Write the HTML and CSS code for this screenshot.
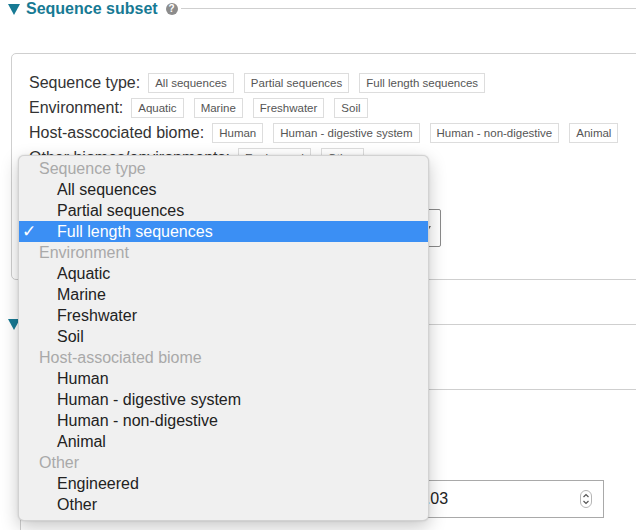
FILE: index.html
```html
<!DOCTYPE html>
<html>
<head>
<meta charset="utf-8">
<link rel="stylesheet" href="styles.css">
</head>
<body>
<div class="page">
  <section class="sec">
    <div class="sec-head">
      <svg class="tri" width="12" height="11" viewBox="0 0 12 11"><polygon points="0,0 12,0 6,11"/></svg>
      <span class="sec-title">Sequence subset</span>
      <span class="help">?</span>
      <span class="rule"></span>
    </div>
    <div class="box">
      <div class="row"><span class="lbl">Sequence type:</span><span class="tag">All sequences</span><span class="tag">Partial sequences</span><span class="tag">Full length sequences</span></div>
      <div class="row"><span class="lbl">Environment:</span><span class="tag">Aquatic</span><span class="tag">Marine</span><span class="tag">Freshwater</span><span class="tag">Soil</span></div>
      <div class="row"><span class="lbl">Host-asscociated biome:</span><span class="tag">Human</span><span class="tag">Human - digestive system</span><span class="tag">Human - non-digestive</span><span class="tag">Animal</span></div>
      <div class="row"><span class="lbl">Other biomes/environments:</span><span class="tag">Engineered</span><span class="tag">Other</span></div>
      <div class="select"><span class="sel-val"></span><span class="caret"></span></div>
    </div>
  </section>

  <section class="sec sec2">
    <div class="sec-head">
      <svg class="tri" width="12" height="11" viewBox="0 0 12 11"><polygon points="0,0 12,0 6,11"/></svg>
      <span class="rule"></span>
    </div>
    <div class="box box2">
      <div class="field">
        <div class="num">
          <span class="num-val">0.03</span>
          <svg class="spin" width="12" height="18" viewBox="0 0 12 18"><rect x="0.5" y="0.5" width="11" height="17" rx="5.5" fill="#fff" stroke="#b5b5b5"/><polyline points="3.5,7 6,4.5 8.5,7" fill="none" stroke="#555" stroke-width="1.2"/><polyline points="3.5,11 6,13.5 8.5,11" fill="none" stroke="#555" stroke-width="1.2"/></svg>
        </div>
      </div>
    </div>
  </section>

  <div class="menu">
    <div class="grp">Sequence type</div>
    <div class="opt">All sequences</div>
    <div class="opt">Partial sequences</div>
    <div class="opt sel"><span class="check">✓</span>Full length sequences</div>
    <div class="grp">Environment</div>
    <div class="opt">Aquatic</div>
    <div class="opt">Marine</div>
    <div class="opt">Freshwater</div>
    <div class="opt">Soil</div>
    <div class="grp">Host-associated biome</div>
    <div class="opt">Human</div>
    <div class="opt">Human - digestive system</div>
    <div class="opt">Human - non-digestive</div>
    <div class="opt">Animal</div>
    <div class="grp">Other</div>
    <div class="opt">Engineered</div>
    <div class="opt">Other</div>
  </div>
</div>
</body>
</html>
```

FILE: styles.css
```css
html, body {
  margin: 0;
  padding: 0;
  background: #fff;
  overflow: hidden;
}
body {
  font-family: "Liberation Sans", Arial, sans-serif;
  color: #333;
  width: 636px;
  height: 530px;
}
.page {
  position: relative;
  width: 636px;
  overflow: hidden;
  height: 530px;
}
.sec-head {
  display: flex;
  align-items: center;
  height: 18px;
  padding-left: 8px;
  width: 628px;
}
.tri {
  fill: #177a94;
  flex: none;
}
.sec-title {
  margin-left: 6px;
  font-size: 16px;
  font-weight: bold;
  color: #177a94;
  white-space: nowrap;
}
.help {
  margin-left: 8px;
  width: 12px;
  height: 12px;
  border-radius: 50%;
  background: #8c8c8c;
  color: #fff;
  font-size: 10px;
  font-weight: bold;
  line-height: 12px;
  text-align: center;
  flex: none;
}
.rule {
  flex: 1;
  height: 1px;
  background: #cfcfcf;
  margin-left: 3px;
  margin-top: -2px;
}
.box {
  margin-top: 35px;
  margin-left: 11px;
  border: 1px solid #cfcfcf;
  border-radius: 5px;
  padding: 19px 17px 32px;
  width: 660px;
  background: #fff;
}
.row {
  display: flex;
  align-items: center;
  height: 20px;
  margin-bottom: 5px;
  white-space: nowrap;
}
.lbl {
  font-size: 16px;
  color: #333;
  margin-right: 8px;
}
.tag {
  display: inline-block;
  height: 18px;
  line-height: 18px;
  border: 1px solid #ddd;
  padding: 0 6px;
  font-size: 11.5px;
  color: #555;
  margin-right: 10px;
}
.select {
  margin-top: 41px;
  border: 1px solid #8a8a8a;
  border-radius: 2px;
  display: flex;
  align-items: center;
  justify-content: space-between;
  padding: 0 8px 0 10px;
  box-sizing: border-box;
  width: 412px;
  height: 38px;
  font-size: 16px;
}
.caret {
  width: 0;
  height: 0;
  border-left: 3px solid transparent;
  border-right: 3px solid transparent;
  border-top: 5px solid #666;
  margin-right: 1px;
}
.sec2 .sec-head {
  margin-top: 35px;
}
.sec2 .rule {
  margin-left: 20px;
  margin-top: 0;
}
.box2 {
  margin-top: 56px;
  margin-left: 20px;
  border-radius: 0;
  padding: 90px 0 20px;
}
.field {
  display: flex;
  padding-left: 384px;
}
.num {
  width: 199px;
  height: 38px;
  box-sizing: border-box;
  border: 1px solid #a9a9a9;
  display: flex;
  align-items: center;
  justify-content: space-between;
  padding: 0 11px 0 11px;
  font-size: 16px;
  color: #222;
}
.spin {
  display: block;
}
.menu {
  position: absolute;
  left: 18px;
  top: 155px;
  width: 411px;
  box-sizing: border-box;
  padding: 2px 0 5px;
  background: #f0f0f0;
  border-radius: 6px;
  border: 1px solid rgba(0, 0, 0, 0.12);
  box-shadow: 0 6px 18px rgba(0, 0, 0, 0.22), 0 0 2px rgba(0, 0, 0, 0.15);
  font-size: 16px;
  line-height: 21px;
}
.grp {
  height: 21px;
  padding-left: 20px;
  color: #a9a9a9;
}
.opt {
  position: relative;
  height: 21px;
  padding-left: 38px;
  color: #222;
}
.opt.sel {
  background: #3b8ff4;
  color: #fff;
}
.check {
  position: absolute;
  left: 3px;
  top: 0;
  font-family: "DejaVu Sans", sans-serif;
  font-size: 17px;
  font-weight: bold;
}
```
